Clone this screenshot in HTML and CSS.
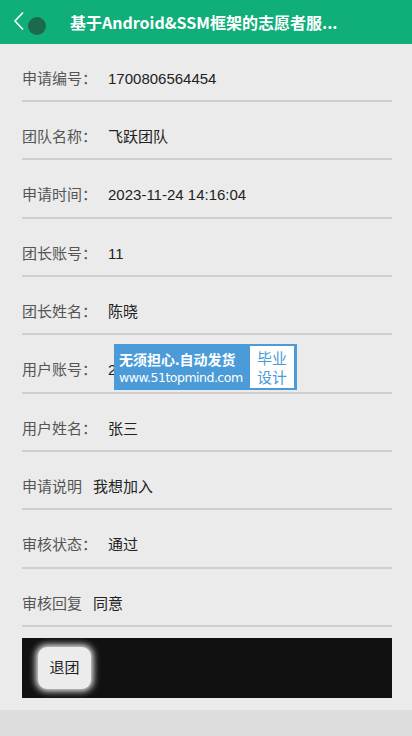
FILE: index.html
```html
<!DOCTYPE html>
<html lang="zh-CN">
<head>
	<meta charset="UTF-8">
	<title>申请详情</title>
	<link rel="stylesheet" href="styles.css">
</head>
<body>
<div class="page">
	<div class="header">
		<a href="javascript:;" class="back">
			<svg width="12" height="20" viewBox="0 0 12 20"><path d="M10 1.5 L2 10 L10 18.5" fill="none" stroke="#fff" stroke-width="1.6"/></svg>
		</a>
		<span class="dot"></span>
		<h1 class="title">基于Android&amp;SSM框架的志愿者服...</h1>
	</div>

	<ul class="info">
		<li><span class="label">申请编号：</span><span class="val">1700806564454</span></li>
		<li><span class="label">团队名称：</span><span class="val">飞跃团队</span></li>
		<li><span class="label">申请时间：</span><span class="val">2023-11-24 14:16:04</span></li>
		<li><span class="label">团长账号：</span><span class="val">11</span></li>
		<li><span class="label">团长姓名：</span><span class="val">陈晓</span></li>
		<li><span class="label">用户账号：</span><span class="val">2</span></li>
		<li><span class="label">用户姓名：</span><span class="val">张三</span></li>
		<li><span class="label">申请说明</span><span class="val">我想加入</span></li>
		<li><span class="label">审核状态：</span><span class="val">通过</span></li>
		<li><span class="label">审核回复</span><span class="val">同意</span></li>
	</ul>

	<div class="bar">
		<a href="javascript:;" class="btn">退团</a>
	</div>

	<div class="mark">
		<div class="mark-txt">
			<p class="m1">无须担心.自动发货</p>
			<p class="m2">www.51topmind.com</p>
		</div>
		<div class="mark-box">毕业<br>设计</div>
	</div>
</div>
<div class="foot"></div>
</body>
</html>
```

FILE: styles.css
```css
body,h1,p,ul,li{margin:0;padding:0}
ul{list-style:none}
a{text-decoration:none}
body{
    font:15px/20px "Liberation Sans", "Noto Sans CJK SC", sans-serif;
    color:#333;
    background:#ddd;
}

.page{
    position:relative;
    background:#ebebeb;
    padding-bottom:12px;
}
.header{
    height:44px;
    background:#10ae79;
    display:flex;
    align-items:center;
}
.back{
    display:flex;
    margin-left:13px;
    margin-top:-2px;
}
.dot{
    width:18px;
    height:18px;
    border-radius:50%;
    background:#1b6a4c;
    margin-left:3px;
    margin-top:8px;
}
.title{
    margin-left:24px;
    font:bold 16px/22px "Noto Sans CJK SC", "Liberation Sans", sans-serif;
    color:#fff;
    white-space:nowrap;
}

.info{
    padding:0 20px 0 22px;
}
.info li{
    display:flex;
    padding:25px 0 11px;
    border-bottom:2px solid #cfcfcf;
}
.info li:nth-child(3n){
    padding-bottom:12px;
}
.label{
    color:#555;
}
.val{
    margin-left:11px;
    color:#222;
}

.bar{
    margin:11px 20px 0 22px;
    height:60px;
    background:#111;
    display:flex;
    align-items:center;
    padding-left:16px;
}
.btn{
    width:53px;
    height:42px;
    border-radius:9px;
    background:#ececec;
    box-shadow:0 0 7px 2px #fff;
    color:#222;
    font-size:15px;
    display:flex;
    align-items:center;
    justify-content:center;
}

.mark{
    position:absolute;
    left:114px;
    top:344px;
    width:183px;
    height:46px;
    background:#4b9bd9;
    display:flex;
    align-items:center;
    box-sizing:border-box;
    padding:0 3px 0 5px;
}
.mark-txt{
    flex:1;
    color:#fff;
}
.m1{
    font-weight:bold;
    font-size:14px;
    line-height:20px;
    font-family:"Noto Sans CJK SC", sans-serif;
}
.m2{
    font-size:12.5px;
    line-height:17px;
    font-family:"DejaVu Sans", sans-serif;
    letter-spacing:-0.5px;
}
.mark-box{
    width:44px;
    height:42px;
    background:#fff;
    color:#4b9bd9;
    font-size:15px;
    line-height:19px;
    text-align:center;
    padding-top:2px;
    box-sizing:border-box;
    font-family:"Noto Sans CJK SC", sans-serif;
}
.foot{
    height:26px;
}
```
